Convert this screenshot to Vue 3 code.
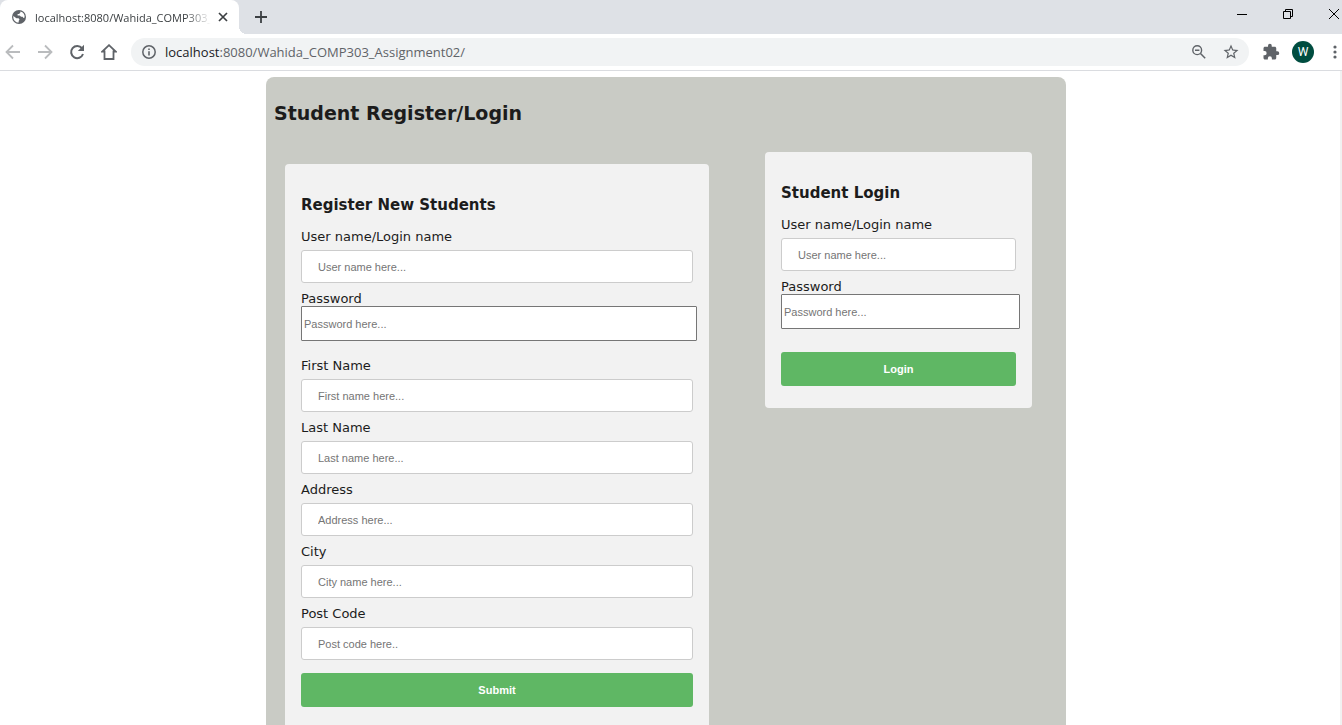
<script setup>
const registerFields = [
  { id: 'reg-user', label: 'User name/Login name', hint: 'User name here...' },
  { id: 'reg-pass', label: 'Password', hint: 'Password here...', type: 'password' },
  { id: 'reg-first', label: 'First Name', hint: 'First name here...' },
  { id: 'reg-last', label: 'Last Name', hint: 'Last name here...' },
  { id: 'reg-address', label: 'Address', hint: 'Address here...' },
  { id: 'reg-city', label: 'City', hint: 'City name here...' },
  { id: 'reg-post', label: 'Post Code', hint: 'Post code here..' }
]
const loginFields = [
  { id: 'log-user', label: 'User name/Login name', hint: 'User name here...' },
  { id: 'log-pass', label: 'Password', hint: 'Password here...', type: 'password' }
]
</script>

<template>
  <div class="browser">
    <header class="tab-strip">
      <div class="tab">
        <svg class="globe" viewBox="0 0 14 14" width="14" height="14">
          <circle cx="7" cy="7" r="7" fill="#5f6368" />
          <path d="M1.400 6 4.400 8.300h2.200l.9 1.200-.8 1.400v1.700C3.500 12.600 1.300 10 1.300 7zM8.300 1.400v1.300L7 3.900H5.600v1.500H7.800l1.200 1.300h1.600l.8 1.300 1.200-.4A5.700 5.700 0 0 0 8.300 1.400z" fill="#fff" />
        </svg>
        <span class="tab-title">localhost:8080/Wahida_COMP303_Assignment02/</span>
        <button class="icon-btn" aria-label="Close tab">
          <svg viewBox="0 0 10 10" width="10" height="10"><path d="M1 1l8 8M9 1l-8 8" stroke="#3c4043" stroke-width="1.700" fill="none" /></svg>
        </button>
      </div>
      <button class="icon-btn new-tab" aria-label="New tab">
        <svg viewBox="0 0 12 12" width="12" height="12"><path d="M6 0v12M0 6h12" stroke="#3c4043" stroke-width="1.800" fill="none" /></svg>
      </button>
      <div class="window-controls">
        <button class="icon-btn" aria-label="Minimize">
          <svg viewBox="0 0 10 10" width="10" height="10"><path d="M0 5.500h10" stroke="#000" fill="none" /></svg>
        </button>
        <button class="icon-btn" aria-label="Restore">
          <svg viewBox="0 0 10 10" width="10" height="10"><path d="M.5 2.500h7v7h-7zM2.500 2.500v-2h7v7h-2" stroke="#000" fill="none" /></svg>
        </button>
        <button class="icon-btn" aria-label="Close window">
          <svg viewBox="0 0 10 10" width="10" height="10"><path d="M0 0l10 10M10 0L0 10" stroke="#000" fill="none" /></svg>
        </button>
      </div>
    </header>

    <nav class="toolbar">
      <div class="nav-buttons">
        <button class="icon-btn" aria-label="Back">
          <svg viewBox="0 0 16 16" width="16" height="16"><path d="M15 8H2M8 1.500L1.500 8 8 14.500" stroke="#babcbe" stroke-width="1.800" fill="none" /></svg>
        </button>
        <button class="icon-btn" aria-label="Forward">
          <svg viewBox="0 0 16 16" width="16" height="16"><path d="M1 8h13M8 1.500L14.500 8 8 14.500" stroke="#babcbe" stroke-width="1.800" fill="none" /></svg>
        </button>
        <button class="icon-btn" aria-label="Reload">
          <svg viewBox="0 0 16 16" width="16" height="16"><path d="M13 4.200A6.100 6.100 0 1 0 14 10" stroke="#5f6368" stroke-width="2" fill="none" /><path d="M15 .8V7H8.800z" fill="#5f6368" /></svg>
        </button>
        <button class="icon-btn" aria-label="Home">
          <svg viewBox="0 0 16 16" width="16" height="16"><path d="M3.500 7.500v7.500h9V7.500h2.200L8 1.200 1.300 7.500z" stroke="#5f6368" stroke-width="1.800" fill="none" /></svg>
        </button>
      </div>
      <div class="omnibox">
        <svg viewBox="0 0 14 14" width="14" height="14"><circle cx="7" cy="7" r="6.200" stroke="#5f6368" stroke-width="1.500" fill="none" /><path d="M7 6.200v4.300M7 3.500v1.500" stroke="#5f6368" stroke-width="1.600" /></svg>
        <div class="address" role="textbox" aria-label="Address" contenteditable="true"><span class="host">localhost</span>:8080/Wahida_COMP303_Assignment02/</div>
        <button class="icon-btn" aria-label="Zoom">
          <svg viewBox="0 0 14 14" width="14" height="14"><circle cx="5.200" cy="5.200" r="4.400" stroke="#5f6368" stroke-width="1.400" fill="none" /><path d="M3 5.200h4.400M8.500 8.500l4.700 4.700" stroke="#5f6368" stroke-width="1.500" fill="none" /></svg>
        </button>
        <button class="icon-btn" aria-label="Bookmark">
          <svg viewBox="0 0 24 24" width="18" height="18"><path fill="#5f6368" d="M22 9.240l-7.190-.62L12 2 9.190 8.630 2 9.240l5.460 4.730L5.820 21 12 17.270 18.180 21l-1.630-7.030L22 9.240zM12 15.400l-3.760 2.270 1-4.280-3.320-2.880 4.380-.38L12 6.100l1.710 4.040 4.380.38-3.320 2.880 1 4.280L12 15.400z" /></svg>
        </button>
      </div>
      <div class="actions">
        <button class="icon-btn" aria-label="Extensions">
          <svg viewBox="0 0 24 24" width="18" height="18"><path fill="#5f6368" d="M20.500 11H19V7c0-1.100-.9-2-2-2h-4V3.500a2.500 2.500 0 0 0-5 0V5H4c-1.100 0-2 .9-2 2v3.800h1.500a2.700 2.700 0 0 1 0 5.400H2V20c0 1.100.9 2 2 2h3.800v-1.500a2.700 2.700 0 0 1 5.400 0V22H17c1.100 0 2-.9 2-2v-4h1.500a2.500 2.500 0 0 0 0-5z" /></svg>
        </button>
        <button class="avatar" aria-label="Profile">W</button>
        <button class="icon-btn" aria-label="Menu">
          <svg viewBox="0 0 4 14" width="4" height="14"><g fill="#5f6368"><circle cx="2" cy="2" r="1.600" /><circle cx="2" cy="7" r="1.600" /><circle cx="2" cy="12" r="1.600" /></g></svg>
        </button>
      </div>
    </nav>

    <main class="page">
      <div class="container">
        <h2>Student Register/Login</h2>
        <div class="columns">
          <form class="card register" @submit.prevent>
            <h3>Register New Students</h3>
            <div v-for="f in registerFields" :key="f.id" class="field" :class="f.type">
              <label :for="f.id">{{ f.label }}</label>
              <input :id="f.id" :type="f.type || 'text'" :placeholder="f.hint" />
            </div>
            <button class="submit">Submit</button>
          </form>
          <form class="card login" @submit.prevent>
            <h3>Student Login</h3>
            <div v-for="f in loginFields" :key="f.id" class="field" :class="f.type">
              <label :for="f.id">{{ f.label }}</label>
              <input :id="f.id" :type="f.type || 'text'" :placeholder="f.hint" />
            </div>
            <button class="submit">Login</button>
          </form>
        </div>
      </div>
    </main>
  </div>
</template>

<style>
body {
  margin: 0;
}
</style>

<style scoped>
* {
  box-sizing: border-box;
}
.browser {
  display: flex;
  flex-direction: column;
  height: 100vh;
  background: #fff;
  font-family: "Open Sans", "Noto Sans", sans-serif;
}
button {
  border: 0;
  padding: 0;
  cursor: pointer;
}
.icon-btn {
  display: flex;
  flex: none;
  background: none;
}
svg {
  display: block;
  flex: none;
}
.tab-strip {
  display: flex;
  flex: none;
  height: 34px;
  background: #dee1e6;
}
.tab {
  position: relative;
  display: flex;
  align-items: center;
  width: 239px;
  padding: 0 11px 0 12px;
  background: #fff;
  border-radius: 8px 8px 0 0;
}
.tab::after {
  content: "";
  position: absolute;
  left: 100%;
  bottom: 0;
  width: 8px;
  height: 8px;
  background: radial-gradient(circle at 100% 0, transparent 8px, #fff 8px);
}
.tab-title {
  flex: 1;
  min-width: 0;
  margin: 0 7px 0 9px;
  overflow: hidden;
  white-space: nowrap;
  font-size: 11px;
  color: #3c4043;
  mask-image: linear-gradient(to right, #000 150px, transparent 176px);
}
.new-tab {
  align-items: center;
  margin-left: 16px;
}
.window-controls {
  display: flex;
  gap: 36px;
  align-items: center;
  margin-left: auto;
  padding: 0 3px 6px 0;
}
.toolbar {
  display: flex;
  flex: none;
  align-items: center;
  height: 37px;
  border-bottom: 1px solid #dadce0;
}
.nav-buttons {
  display: flex;
  gap: 16px;
  padding: 0 14px 0 5px;
}
.omnibox {
  display: flex;
  flex: 1;
  align-items: center;
  height: 28px;
  padding: 0 9px 0 11px;
  border-radius: 14px;
  background: #f1f3f4;
}
.address {
  flex: 1;
  margin-left: 9px;
  outline: none;
  font-size: 13px;
  line-height: 20px;
  color: #5f6368;
}
.host {
  color: #202124;
}
.omnibox .icon-btn {
  margin-left: 16px;
}
.actions {
  display: flex;
  align-items: center;
  gap: 12px;
  padding: 0 5px 0 13px;
}
.actions .icon-btn:last-child {
  margin-left: 7px;
}
.avatar {
  width: 22px;
  height: 22px;
  border-radius: 50%;
  background: #004d40;
  color: #fff;
  font: 12px/22px Roboto, sans-serif;
}
.page {
  flex: 1;
  min-height: 0;
  overflow-y: auto;
  scrollbar-width: none;
  padding: 6px 8px 8px 0;
  border-right: 2px solid #f1f1f1;
  font-family: Verdana, "DejaVu Sans", sans-serif;
  color: #1c1c1c;
}
.container {
  max-width: 800px;
  margin: 0 auto;
  padding: 22px 8px 24px;
  border-radius: 8px;
  background: #c9cbc5;
}
h2 {
  margin: 0;
  font-size: 19px;
  line-height: 28px;
}
.columns {
  display: grid;
  grid-template-columns: minmax(0, 424fr) minmax(0, 267fr);
  align-items: start;
  gap: 56px;
  padding: 25px 26px 0 11px;
}
.card {
  padding: 30px 16px 22px;
  border-radius: 4px;
  background: #f2f2f2;
}
.register {
  margin-top: 12px;
}
h3 {
  margin: 0 0 12px;
  font-size: 15px;
  line-height: 22px;
}
.field {
  margin-bottom: 7px;
}
label {
  display: block;
  height: 16px;
  font-size: 13px;
  line-height: 18px;
  margin-bottom: 6px;
}
input {
  display: block;
  width: 100%;
  height: 33px;
  padding: 0 16px;
  border: 1px solid #ccc;
  border-radius: 3px;
  background: #fff;
  font: 11px "Liberation Sans", Arial, sans-serif;
}
input::placeholder {
  color: #757575;
}
.password {
  margin-bottom: 16px;
}
.password label {
  margin-bottom: 0;
}
.password input {
  width: calc(100% + 4px);
  height: 35px;
  padding: 0 2px;
  border-color: #767676;
  border-radius: 1px;
}
.submit {
  display: block;
  width: 100%;
  height: 34px;
  margin-top: 13px;
  border-radius: 3px;
  background: #5fb764;
  color: #fff;
  font: bold 11px "Liberation Sans", Arial, sans-serif;
}
.login .submit {
  margin-top: 23px;
}
</style>
